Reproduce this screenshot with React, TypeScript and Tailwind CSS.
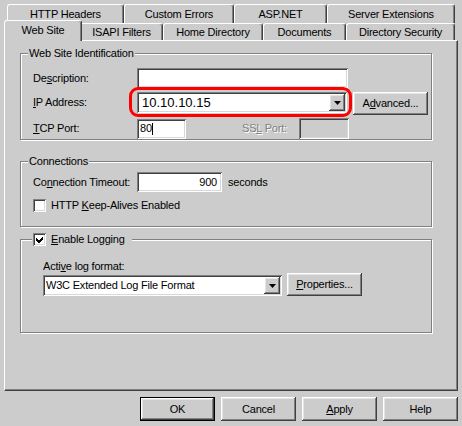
import React from "react";

const raised =
  "bg-[#cccccc] shadow-[inset_-1px_-1px_#404040,inset_1px_1px_#ffffff,inset_-2px_-2px_#808080,inset_2px_2px_#e4e4e4]";
const sunken =
  "shadow-[inset_1px_1px_#808080,inset_-1px_-1px_#ffffff,inset_2px_2px_#404040,inset_-2px_-2px_#d8d8d8]";
const groupBox =
  "relative w-[412px] border border-[#808080] shadow-[inset_1px_1px_#ffffff,1px_1px_#ffffff]";

const Check = ({ checked }: { checked?: boolean }) => (
  <div className={"w-[13px] h-[13px] shrink-0 bg-white " + sunken}>
    {checked && (
      <svg width="13" height="13" viewBox="0 0 13 13" shapeRendering="crispEdges">
        <polygon points="3,5 5.5,7.5 10,3 10,6 5.5,10.5 3,8" fill="#000" />
      </svg>
    )}
  </div>
);

const Arrow = () => (
  <div className={"w-[16px] h-[17px] mr-[2px] flex items-center justify-center " + raised}>
    <svg width="7" height="4" viewBox="0 0 7 4">
      <polygon points="0,0 7,0 3.5,4" fill="#000" />
    </svg>
  </div>
);

const Button = ({ children, className }: { children: React.ReactNode; className?: string }) => (
  <div className={"flex items-center justify-center " + raised + " " + (className || "")}>{children}</div>
);

const Tab = ({ label, cls }: { label: string; cls: string }) => (
  <div
    className={
      "h-full flex items-center justify-center bg-[#cccccc] border-t border-l border-white border-r border-r-[#404040] rounded-t-[3px] shadow-[inset_-1px_0_#808080] " +
      cls
    }
  >
    {label}
  </div>
);

const Legend = ({ children, className }: { children: React.ReactNode; className?: string }) => (
  <div className={"absolute -top-[7px] h-[13px] flex items-center bg-[#cccccc] leading-[13px] " + (className || "")}>
    {children}
  </div>
);

export default function App() {
  return (
    <div className="w-[462px] h-[426px] overflow-hidden bg-[#cccccc] text-[11px] tracking-[-0.2px] text-black font-['Liberation_Sans',Arial,sans-serif] pt-[4px]">
      <div className="flex pl-[7px] h-[19px]">
        {row1.map((t) => (
          <Tab key={t.label} label={t.label} cls={t.cls} />
        ))}
      </div>
      <div className="flex pl-[6px] h-[17px]">
        <div className="relative z-10 -mx-[2px] -mt-[3px] h-[21px] w-[78px] shrink-0 flex items-center justify-center pb-[1px] bg-[#cccccc] border-t border-l border-white border-r border-r-[#404040] rounded-t-[3px] shadow-[inset_-1px_0_#808080]">
          Web Site
        </div>
        {row2.map((t) => (
          <Tab key={t.label} label={t.label} cls={t.cls} />
        ))}
      </div>

      <div className="mx-[4px] h-[351px] border border-white border-r-[#404040] border-b-[#404040] shadow-[inset_-1px_-1px_#808080] pt-[12px] pl-[15px]">
        {/* web site identification */}
        <div className={groupBox + " pt-[14px] pl-[12px]"}>
          <Legend className="left-[7px] px-[1px]">Web Site Identification</Legend>
          <div className="flex items-center h-[20px]">
            <div className="w-[104px]">
              De<span className="underline">s</span>cription:
            </div>
            <div className={"w-[211px] h-[20px] bg-white " + sunken} />
          </div>
          <div className="flex items-start h-[23px] mt-[4px]">
            <div className="w-[104px] h-[21px] flex items-center">
              <span className="underline">I</span>P Address:
            </div>
            <div className={"relative flex items-center w-[210px] h-[21px] bg-white " + sunken}>
              <span className="flex-1 pl-[5px] text-[13px] tracking-normal">10.10.10.15</span>
              <Arrow />
              <div className="absolute -left-[8px] -top-[5px] -right-[5px] -bottom-[4px] border-[3px] border-[#ff0000] rounded-[9px]" />
            </div>
            <Button className="ml-[6px] w-[75px] h-[23px]">
              A<span className="underline">d</span>vanced...
            </Button>
          </div>
          <div className="flex items-center h-[21px] mt-[3px]">
            <div className="w-[104px]">
              <span className="underline">T</span>CP Port:
            </div>
            <div className={"w-[49px] h-[20px] bg-white flex items-center pl-[3px] " + sunken}>
              80<span className="w-[1px] h-[12px] bg-black" />
            </div>
            <div className="ml-[56px] w-[57px] text-[#808080] [text-shadow:1px_1px_#ffffff]">
              SS<span className="underline">L</span> Port:
            </div>
            <div className={"w-[50px] h-[21px] bg-[#cccccc] " + sunken} />
          </div>
        </div>

        {/* connections */}
        <div className={groupBox + " mt-[21px] pt-[10px] pb-[14px] pl-[12px]"}>
          <Legend className="left-[7px] px-[1px]">Connections</Legend>
          <div className="flex items-center h-[20px]">
            <div className="w-[104px]">
              Co<span className="underline">n</span>nection Timeout:
            </div>
            <div className={"w-[85px] h-[20px] bg-white flex items-center justify-end pr-[5px] " + sunken}>900</div>
            <div className="ml-[6px]">seconds</div>
          </div>
          <div className="flex items-center h-[14px] mt-[6px]">
            <Check />
            <div className="ml-[5px]">
              HTTP <span className="underline">K</span>eep-Alives Enabled
            </div>
          </div>
        </div>

        {/* logging */}
        <div className={groupBox + " mt-[12px] pt-[20px] pb-[36px] pl-[22px]"}>
          <Legend className="left-[11px] pl-[1px] pr-[7px]">
            <Check checked />
            <div className="ml-[5px]">
              <span className="underline">E</span>nable Logging
            </div>
          </Legend>
          <div className="h-[13px] leading-[13px]">
            Acti<span className="underline">v</span>e log format:
          </div>
          <div className="flex items-start h-[23px]">
            <div className={"mt-[2px] flex items-center w-[239px] h-[21px] bg-white " + sunken}>
              <span className="flex-1 pl-[3px]">W3C Extended Log File Format</span>
              <Arrow />
            </div>
            <Button className="ml-[5px] w-[75px] h-[23px]">
              <span className="underline">P</span>roperties...
            </Button>
          </div>
        </div>
      </div>

      <div className="flex justify-end gap-[6px] pr-[4px] mt-[6px]">
        <div className="w-[75px] h-[24px] border border-black">
          <Button className="w-full h-full">OK</Button>
        </div>
        <Button className="w-[75px] h-[24px]">Cancel</Button>
        <Button className="w-[75px] h-[24px]">
          <span className="underline">A</span>pply
        </Button>
        <Button className="w-[75px] h-[24px]">Help</Button>
      </div>
    </div>
  );
}

const row1 = [
  { label: "HTTP Headers", cls: "w-[117px]" },
  { label: "Custom Errors", cls: "w-[110px]" },
  { label: "ASP.NET", cls: "w-[93px]" },
  { label: "Server Extensions", cls: "w-[128px]" },
];

const row2 = [
  { label: "ISAPI Filters", cls: "w-[83px]" },
  { label: "Home Directory", cls: "w-[100px]" },
  { label: "Documents", cls: "w-[83px]" },
  { label: "Directory Security", cls: "w-[109px]" },
];
